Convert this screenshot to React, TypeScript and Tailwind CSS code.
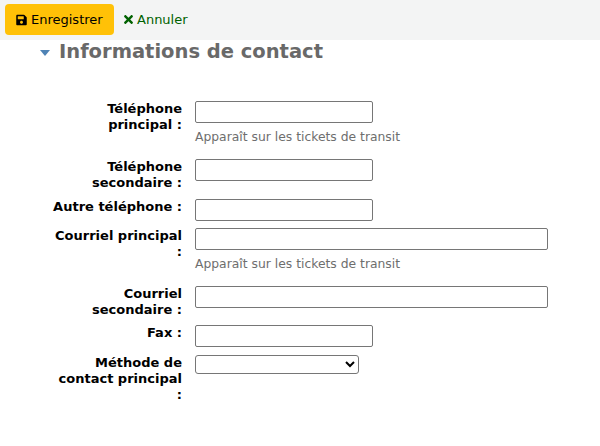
import React from "react";
import { FaSave, FaTimes } from "react-icons/fa";

function Row({ label, wide, hint, select, cls }: { label: React.ReactNode; wide?: boolean; hint?: boolean; select?: boolean; cls: string }) {
  return (
    <div className={`flex items-start ${cls}`}>
      <label className="w-[132px] ml-[50px] mr-[13px] shrink-0 text-right font-bold text-black leading-[16px]">{label}</label>
      <div className="flex flex-col items-start">
        {select ? (
          <select className="w-[164px] h-[19px] bg-white border border-[#767676] rounded-[3px] text-[13px]" />
        ) : (
          <input className={`${wide ? "w-[353px]" : "w-[178px]"} h-[22px] bg-white border border-[#767676] rounded-[2px]`} />
        )}
        {hint && <div className="text-[#6e6e6e] text-[12.35px] leading-[15px] mt-[7px]">Apparaît sur les tickets de transit</div>}
      </div>
    </div>
  );
}

export default function App() {
  return (
    <div className="w-[600px] h-[446px] bg-white overflow-hidden text-[13px] font-['DejaVu_Sans',sans-serif] antialiased">
      <div className="h-10 bg-[#f3f4f4] flex items-start pt-1 pl-[5px]">
        <button className="w-[109px] h-[31px] bg-[#ffc107] rounded-[4px] flex items-center pl-[11px] gap-[4px] text-black text-[13px]">
          <FaSave className="w-[11px] h-[12px]" />
          Enregistrer
        </button>
        <a className="ml-[9px] h-[31px] flex items-center gap-[3px] text-[#006100] text-[13px]">
          <FaTimes className="w-[11px] h-[13px]" />
          Annuler
        </a>
      </div>
      <div className="flex items-center h-[23px] pl-[40px]">
        <svg width="10" height="6" viewBox="0 0 10 6" className="mr-[9px] mt-[3px]">
          <path d="M0 0H10L5 6Z" fill="#4f83b5" />
        </svg>
        <h3 className="text-[19.5px] font-bold text-[#696969] leading-[23px]">Informations de contact</h3>
      </div>
      <div className="pt-[38px]">
        <Row cls="h-[58px]" label={<>Téléphone<br />principal :</>} hint />
        <Row cls="h-[40px]" label={<>Téléphone<br />secondaire :</>} />
        <Row cls="h-[29px]" label="Autre téléphone :" />
        <Row cls="h-[58px]" wide label={<>Courriel principal<br />:</>} hint />
        <Row cls="h-[39px]" wide label={<>Courriel<br />secondaire :</>} />
        <Row cls="h-[30px]" label="Fax :" />
        <Row cls="h-[50px]" select label={<>Méthode de<br />contact principal<br />:</>} />
      </div>
    </div>
  );
}
